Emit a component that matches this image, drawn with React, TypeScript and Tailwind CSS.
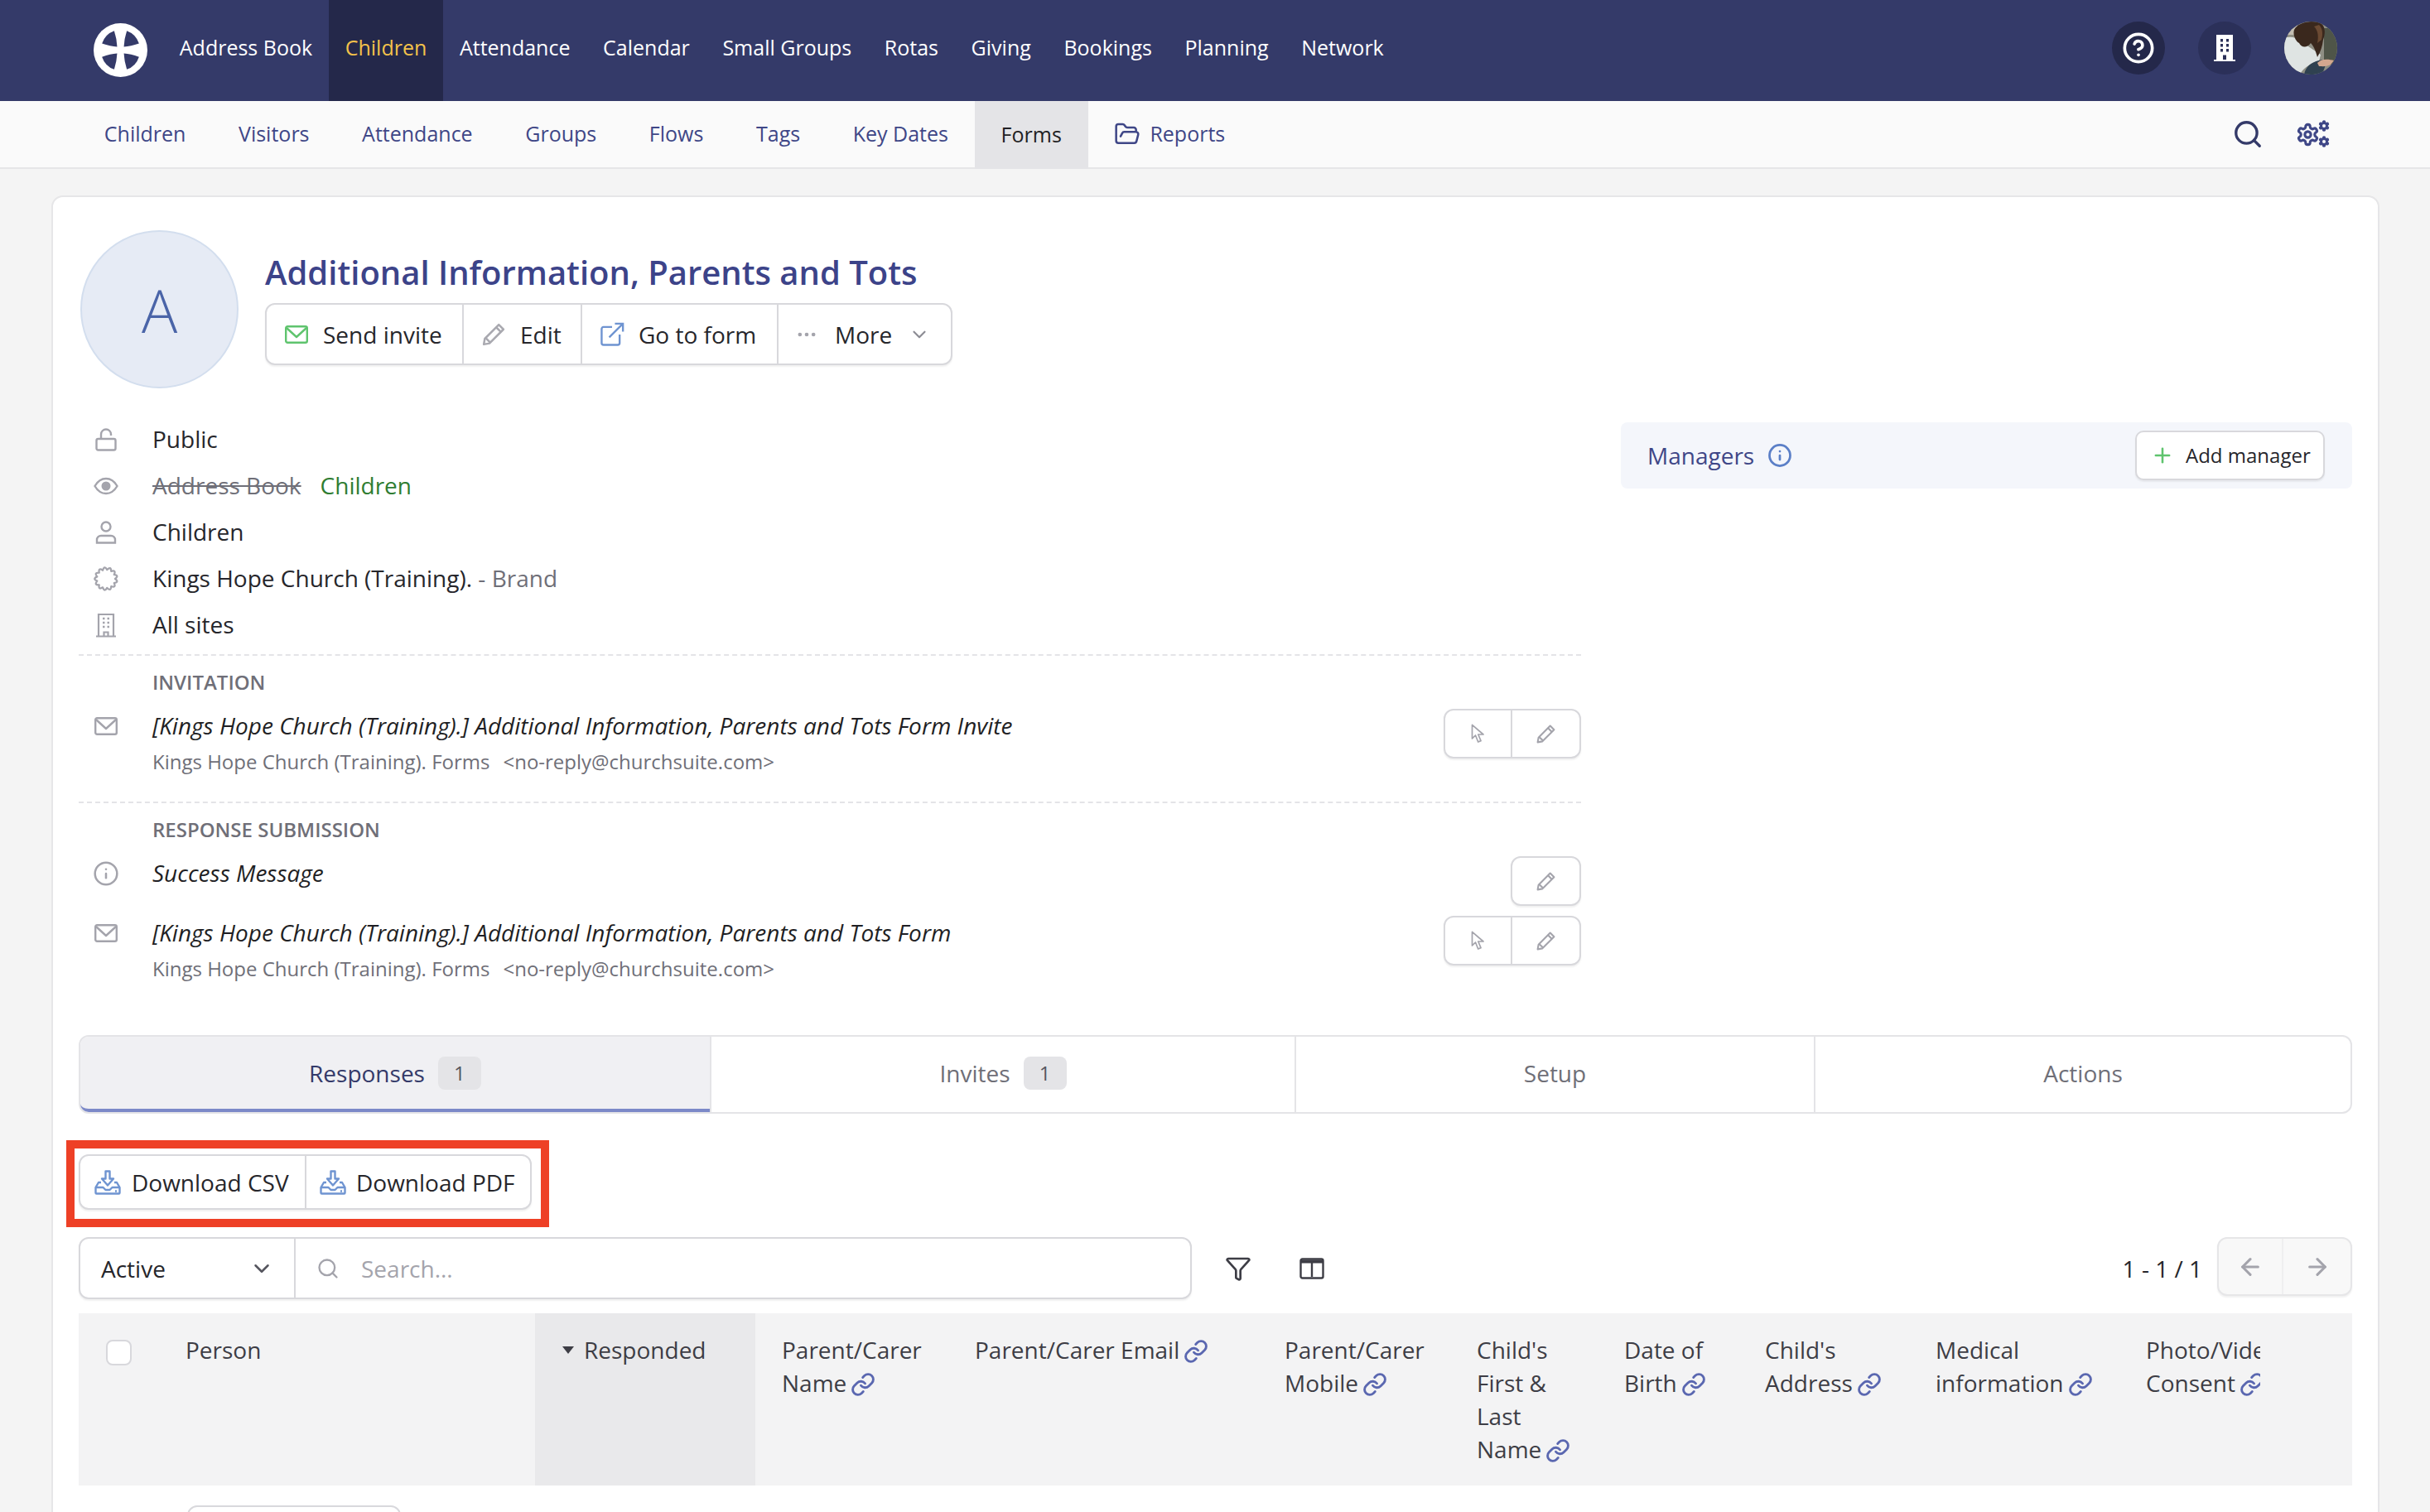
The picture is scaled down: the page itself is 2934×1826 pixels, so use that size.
import {
  ArrowLeft,
  ArrowRight,
  ChevronDown,
  CircleHelp,
  Ellipsis,
  FolderOpen,
  Funnel,
  Info,
  Link,
  Plus,
  Search,
} from 'lucide-react'
import React from 'react'

const topNav = ['Address Book', 'Children', 'Attendance', 'Calendar', 'Small Groups', 'Rotas', 'Giving', 'Bookings', 'Planning', 'Network']
const subNav = ['Children', 'Visitors', 'Attendance', 'Groups', 'Flows', 'Tags', 'Key Dates', 'Forms']

const gearPath =
  'M12.22 2h-.44a2 2 0 0 0-2 2v.18a2 2 0 0 1-1 1.73l-.43.25a2 2 0 0 1-2 0l-.15-.08a2 2 0 0 0-2.73.73l-.22.38a2 2 0 0 0 .73 2.73l.15.1a2 2 0 0 1 1 1.72v.51a2 2 0 0 1-1 1.74l-.15.09a2 2 0 0 0-.73 2.73l.22.38a2 2 0 0 0 2.73.73l.15-.08a2 2 0 0 1 2 0l.43.25a2 2 0 0 1 1 1.73V20a2 2 0 0 0 2 2h.44a2 2 0 0 0 2-2v-.18a2 2 0 0 1 1-1.73l.43-.25a2 2 0 0 1 2 0l.15.08a2 2 0 0 0 2.73-.73l.22-.39a2 2 0 0 0-.73-2.73l-.15-.08a2 2 0 0 1-1-1.74v-.5a2 2 0 0 1 1-1.74l.15-.09a2 2 0 0 0 .73-2.73l-.22-.38a2 2 0 0 0-2.73-.73l-.15.08a2 2 0 0 1-2 0l-.43-.25a2 2 0 0 1-1-1.73V4a2 2 0 0 0-2-2z'

const Logo = () => (
  <svg width="65" height="65" viewBox="0 0 64 64" className="shrink-0">
    <circle cx="32" cy="32" r="32" fill="#fff" />
    <g fill="#343a69">
      <path d="M10 24 Q20 27.500 28 28 Q27.500 18 24.500 9 A24 24 0 0 0 10 24Z" />
      <path d="M54 24 Q44 27.500 36 28 Q36.500 18 39.500 9 A24 24 0 0 1 54 24Z" />
      <path d="M10 40 Q20 36.500 28 36 Q27.500 46 24.500 55 A24 24 0 0 1 10 40Z" />
      <path d="M54 40 Q44 36.500 36 36 Q36.500 46 39.500 55 A24 24 0 0 0 54 40Z" />
    </g>
  </svg>
)

const BuildingSolid = () => (
  <svg width="26" height="32" viewBox="0 0 26 32" fill="#fff">
    <path fillRule="evenodd" d="M3 0h20v30h3v2H0v-2h3zM8 5v3.500h3V5zm7 0v3.500h3V5zM8 11v3.500h3V11zm7 0v3.500h3V11zM8 17v3.500h3V17zm7 0v3.500h3V17zm-4 7.500V30h4v-5.500z" />
  </svg>
)

const Photo = () => (
  <svg width="64" height="64" viewBox="0 0 64 64" className="shrink-0 rounded-full">
    <rect width="64" height="64" fill="#8f8f84" />
    <path d="M48 8h16v44H48z" fill="#4f5548" />
    <path d="M0 0h16v16H0z" fill="#c4bfb3" />
    <path d="M0 20C6 18 14 18 20 24L44 40 42 48C32 50 24 56 20 62 10 60 0 50 0 40Z" fill="#dfe4e3" />
    <path d="M24 64C26 52 36 48 46 46L50 52C48 58 46 64 44 64Z" fill="#2f4150" />
    <path d="M40 50C46 44 54 46 60 47L56 52C50 55 46 54 42 54Z" fill="#d3a78f" />
    <path d="M12 10C16 2 30-2 42 1 50 4 50 14 47 22 46 30 44 36 40 43 38 36 36 30 32 26 26 34 20 30 18 26 14 24 10 16 12 10Z" fill="#3a281d" />
    <path d="M36 6C40 10 42 16 40 26L45 22C47 14 46 8 42 4Z" fill="#6b4a33" />
  </svg>
)

const Cogs = () => (
  <svg width="42" height="34" viewBox="0 0 42 34" fill="none" stroke="#3f4787">
    <svg x="0" y="3" width="29" height="29" viewBox="0 0 24 24" strokeWidth="2.600" strokeLinecap="round" strokeLinejoin="round">
      <path d={gearPath} />
      <circle cx="12" cy="12" r="3" />
    </svg>
    <svg x="27" y="0" width="14" height="14" viewBox="0 0 24 24" fill="#3f4787" strokeWidth="3" strokeLinejoin="round">
      <path d={gearPath} />
      <circle cx="12" cy="12" r="3.500" fill="#fafafa" stroke="none" />
    </svg>
    <svg x="27" y="19" width="14" height="14" viewBox="0 0 24 24" fill="#3f4787" strokeWidth="3" strokeLinejoin="round">
      <path d={gearPath} />
      <circle cx="12" cy="12" r="3.500" fill="#fafafa" stroke="none" />
    </svg>
  </svg>
)

// scalloped ring for the brand row, lobes bulge out between the inner points
const scallop = Array.from({ length: 13 }, (_, i) => {
  const mid = ((i + 0.5) / 13) * Math.PI * 2
  const end = ((i + 1) / 13) * Math.PI * 2
  const cx = (12 + 13.4 * Math.cos(mid)).toFixed(2)
  const cy = (12 + 13.4 * Math.sin(mid)).toFixed(2)
  const x = (12 + 8.8 * Math.cos(end)).toFixed(2)
  const y = (12 + 8.8 * Math.sin(end)).toFixed(2)
  return `Q${cx} ${cy} ${x} ${y}`
}).join(' ')

const BadgeIcon = () => (
  <svg width="30" height="30" viewBox="0 0 24 24" fill="none" stroke="#a4a4ac" strokeWidth="1.800" strokeLinejoin="round">
    <path d={`M20.800 12 ${scallop}Z`} />
  </svg>
)

const BuildingOutline = () => (
  <svg width="28" height="30" viewBox="0 0 28 30" fill="none" stroke="#a4a4ac" strokeWidth="2.200">
    <path d="M5 28.500V2h18v26.500M2 28.500h24M11.500 28.500v-5h5v5" />
    <path d="M10 7h2.500M15.500 7H18M10 12h2.500M15.500 12H18M10 17h2.500M15.500 17H18" strokeWidth="2.500" />
  </svg>
)

const EyeIcon = () => (
  <svg width="30" height="22" viewBox="0 0 30 22" fill="none" stroke="#a4a4ac" strokeWidth="2.400">
    <path d="M1.500 11C5 5 9.500 2 15 2s10 3 13.500 9C25 17 20.500 20 15 20S5 17 1.500 11Z" />
    <circle cx="15" cy="11" r="5.500" fill="#a4a4ac" stroke="none" />
  </svg>
)

const LockIcon = () => (
  <svg width="26" height="28" viewBox="0 0 26 28" fill="none" stroke="#a4a4ac" strokeWidth="2.400">
    <rect x="1.500" y="13" width="23" height="13.500" rx="2" />
    <path d="M7 13V7.500a6 6 0 0 1 12 0V9" />
  </svg>
)

const UserIcon = () => (
  <svg width="26" height="28" viewBox="0 0 26 28" fill="none" stroke="#a4a4ac" strokeWidth="2.400">
    <circle cx="13" cy="7" r="5.500" />
    <path d="M2 26.500V23a5 5 0 0 1 5-5h12a5 5 0 0 1 5 5v3.500z" />
  </svg>
)

const Envelope = ({ color }: { color: string }) => (
  <svg width="28" height="22" viewBox="0 0 28 22" fill="none" stroke={color} strokeWidth="2.400" strokeLinejoin="round" className="shrink-0">
    <rect x="1.200" y="1.200" width="25.600" height="19.600" rx="2" />
    <path d="M2 3l12 11L26 3" />
  </svg>
)

const PencilIcon = ({ size, color }: { size: number; color: string }) => (
  <svg width={size} height={size} viewBox="0 0 24 24" fill="none" stroke={color} strokeWidth="2" strokeLinejoin="round" className="shrink-0">
    <path d="M17 2.500L21.500 7 8 20.500l-5.500 1 1-5.500z" />
    <path d="M14.500 5L19 9.500M4.500 15.500l4 4" />
  </svg>
)

const ExternalIcon = () => (
  <svg width="32" height="32" viewBox="0 0 28 28" fill="none" stroke="#6f94d1" strokeWidth="2.100" className="shrink-0">
    <path d="M14 6H5a2 2 0 0 0-2 2v15a2 2 0 0 0 2 2h15a2 2 0 0 0 2-2v-9" />
    <path d="M11 17L25 3M17 2.500h8.500V11" />
  </svg>
)

const CursorIcon = () => (
  <svg width="17" height="24" viewBox="0 0 17 24" fill="none" stroke="#a4a4ac" strokeWidth="1.700" strokeLinejoin="round">
    <path d="M1.500 1.500V18l4-4 3.200 8 3.300-1.400L8.800 13H15z" />
  </svg>
)

const TrayDown = () => (
  <svg width="32" height="30" viewBox="0 0 32 30" fill="none" stroke="#6f94d1" strokeWidth="2.400" strokeLinejoin="round" className="shrink-0">
    <path d="M13.500 1.500h5v9h4.500L16 18.500 9 10.500h4.500z" />
    <path d="M8 15H5L1.500 21v6.500a1 1 0 0 0 1 1h27a1 1 0 0 0 1-1V21L27 15h-3" />
    <path d="M1.500 21h9l3 3h5l3-3h9" />
    <path d="M25 25.500h2" />
  </svg>
)

const ColumnsIcon = () => (
  <svg width="30" height="26" viewBox="0 0 30 26" fill="none" stroke="#3d3d45" strokeWidth="2.400" className="shrink-0">
    <rect x="1.500" y="1.500" width="27" height="23" rx="2" />
    <path d="M15 3v20" />
    <path d="M1.500 4.500h27" strokeWidth="4" />
  </svg>
)

const LinkIcon = () => <Link size={30} color="#5a67b0" strokeWidth={2.300} className="ml-[5px] inline-block align-[-6px]" />

const ActionButtons = ({ cursor }: { cursor: boolean }) => (
  <div className="flex h-[60px] shrink-0 rounded-[12px] border-2 border-[#d8d8dc] bg-white shadow-[0_2px_2px_rgba(0,0,0,0.06)]">
    {cursor && (
      <div className="flex w-[81px] items-center justify-center border-r-2 border-[#d8d8dc]">
        <CursorIcon />
      </div>
    )}
    <div className="flex w-[81px] items-center justify-center">
      <PencilIcon size={25} color="#a4a4ac" />
    </div>
  </div>
)

const InfoRow = ({ icon, children }: { icon: React.ReactNode; children: React.ReactNode }) => (
  <div className="flex h-[56px] items-center">
    <div className="flex w-[66px] justify-center">{icon}</div>
    <div className="ml-[23px] pb-[2px] text-[28px] text-[#26262b]">{children}</div>
  </div>
)

const MailRow = ({ subject, chunk }: { subject: string; chunk: React.ReactNode }) => (
  <div className="flex">
    <div className="flex h-[44px] w-[89px] shrink-0 items-center pl-[19px]">
      <Envelope color="#a4a4ac" />
    </div>
    <div className="flex-1">
      <div className="h-[44px] text-[28px] leading-[42px] italic text-[#1f1f24]">{subject}</div>
      <div className="h-[44px] text-[24px] leading-[42px] text-[#6f6f78]">
        Kings Hope Church (Training). Forms<span className="ml-[16px]">&lt;no-reply@churchsuite.com&gt;</span>
      </div>
    </div>
    <div className="mt-[1px]">{chunk}</div>
  </div>
)

const columns: { width: number; lines: React.ReactNode[] }[] = [
  { width: 233, lines: ['Parent/Carer', <>Name<LinkIcon /></>] },
  { width: 374, lines: [<>Parent/Carer Email<LinkIcon /></>] },
  { width: 232, lines: ['Parent/Carer', <>Mobile<LinkIcon /></>] },
  { width: 178, lines: ["Child's", 'First &', 'Last', <>Name<LinkIcon /></>] },
  { width: 170, lines: ['Date of', <>Birth<LinkIcon /></>] },
  { width: 206, lines: ["Child's", <>Address<LinkIcon /></>] },
  { width: 254, lines: ['Medical', <>information<LinkIcon /></>] },
  { width: 300, lines: ['Photo/Video', <>Consent<LinkIcon /></>] },
]

const App = () => {
  return (
    <div className="h-[1826px] w-[2934px] overflow-hidden bg-[#f4f4f4] font-['Open_Sans',sans-serif]">
      {/* Top nav */}
      <div className="flex h-[122px] items-stretch bg-[#343a69] pl-[113px] pr-[112px]">
        <div className="flex items-center pb-[2px] pr-[19px]">
          <Logo />
        </div>
        {topNav.map((item) => (
          <div
            key={item}
            className={
              item === 'Children'
                ? 'flex items-center bg-[#24284a] px-[19.8px] pb-[6px] text-[25px] text-[#f3c24a]'
                : 'flex items-center px-[19.8px] pb-[6px] text-[25px] text-white'
            }
          >
            {item}
          </div>
        ))}
        <div className="ml-auto flex items-center gap-[40px] pb-[6px]">
          <div className="flex h-[64px] w-[64px] items-center justify-center rounded-full bg-[#24284a]">
            <CircleHelp size={40} color="#fff" strokeWidth={2.200} />
          </div>
          <div className="flex h-[64px] w-[64px] items-center justify-center rounded-full bg-[#2b3059]">
            <BuildingSolid />
          </div>
          <Photo />
        </div>
      </div>

      {/* Sub nav */}
      <div className="flex h-[82px] items-stretch border-b-2 border-[#e6e6e8] bg-[#fafafa] pl-[94px] pr-[120px]">
        {subNav.map((item) => (
          <div
            key={item}
            className={
              item === 'Forms'
                ? '-mb-[2px] flex items-center bg-[#e4e4e7] px-[31.8px] text-[25px] text-[#1f1f24]'
                : 'flex items-center px-[31.8px] text-[25px] text-[#3f4787]'
            }
          >
            {item}
          </div>
        ))}
        <div className="flex items-center gap-[11px] px-[31.8px] text-[25px] text-[#3f4787]">
          <FolderOpen size={32} strokeWidth={1.900} />
          Reports
        </div>
        <div className="ml-auto flex items-center gap-[39px]">
          <Search size={38} color="#343a69" strokeWidth={2.100} />
          <Cogs />
        </div>
      </div>

      {/* Card */}
      <div className="ml-[62px] mt-[32px] h-[1700px] w-[2811px] rounded-[14px] border-2 border-[#e6e6e8] bg-white pl-[31px] pr-[31px] pt-[40px]">
        <div className="flex gap-[32px] pl-[2px]">
          <div className="flex h-[191px] w-[191px] shrink-0 items-center justify-center rounded-full border-2 border-[#d3deee] bg-[#e6ebf5] text-[72px] font-light text-[#4a64a8]">
            A
          </div>
          <div className="pt-[21px]">
            <div className="h-[60px] text-[40px] leading-[60px] font-semibold text-[#3c4389]">Additional Information, Parents and Tots</div>
            <div className="mt-[7px] flex h-[75px] w-[830px] items-stretch rounded-[12px] border-2 border-[#d8d8dc] bg-white text-[28px] text-[#26262b] shadow-[0_2px_2px_rgba(0,0,0,0.06)]">
              <div className="flex w-[238px] items-center gap-[18px] border-r-2 border-[#d8d8dc] pl-[22px]">
                <Envelope color="#5fc46e" />
                Send invite
              </div>
              <div className="flex w-[143px] items-center gap-[17px] border-r-2 border-[#d8d8dc] pl-[21px]">
                <PencilIcon size={30} color="#a9a9b0" />
                Edit
              </div>
              <div className="flex w-[237px] items-center gap-[16px] border-r-2 border-[#d8d8dc] pl-[20px]">
                <ExternalIcon />
                Go to form
              </div>
              <div className="flex flex-1 items-center pl-[20px]">
                <Ellipsis size={28} color="#a4a4ac" strokeWidth={2} />
                <span className="ml-[20px]">More</span>
                <ChevronDown size={26} color="#8c8c94" strokeWidth={2} className="ml-[20px]" />
              </div>
            </div>
          </div>
        </div>

        <div className="mt-[34px] flex gap-[48px]">
          {/* Left column */}
          <div className="w-[1814px] shrink-0">
            <InfoRow icon={<LockIcon />}>Public</InfoRow>
            <InfoRow icon={<EyeIcon />}>
              <span className="text-[#6f6f78] line-through">Address Book</span>
              <span className="ml-[23px] text-[#2f7d32]">Children</span>
            </InfoRow>
            <InfoRow icon={<UserIcon />}>Children</InfoRow>
            <InfoRow icon={<BadgeIcon />}>
              Kings Hope Church (Training).<span className="text-[#6f6f78]"> - Brand</span>
            </InfoRow>
            <InfoRow icon={<BuildingOutline />}>All sites</InfoRow>

            <div className="mt-[7px] border-t-2 border-dashed border-[#e4e4e7]" />
            <div className="ml-[89px] mt-[12px] h-[40px] text-[24px] leading-[40px] font-semibold text-[#6f6f78]">INVITATION</div>
            <div className="mt-[11px]">
              <MailRow subject="[Kings Hope Church (Training).] Additional Information, Parents and Tots Form Invite" chunk={<ActionButtons cursor />} />
            </div>

            <div className="mt-[25px] border-t-2 border-dashed border-[#e4e4e7]" />
            <div className="ml-[89px] mt-[12px] h-[40px] text-[24px] leading-[40px] font-semibold text-[#6f6f78]">RESPONSE SUBMISSION</div>
            <div className="mt-[11px] flex h-[72px]">
              <div className="flex h-[44px] w-[89px] shrink-0 items-center pl-[17px]">
                <Info size={32} color="#a4a4ac" strokeWidth={1.900} />
              </div>
              <div className="h-[44px] flex-1 text-[28px] leading-[42px] italic text-[#1f1f24]">Success Message</div>
              <div className="mt-[1px]">
                <ActionButtons cursor={false} />
              </div>
            </div>
            <MailRow subject="[Kings Hope Church (Training).] Additional Information, Parents and Tots Form" chunk={<ActionButtons cursor />} />
          </div>

          {/* Managers */}
          <div className="mt-[7px] flex h-[80px] w-[883px] items-center rounded-[8px] bg-[#f4f6fb] pl-[32px] pr-[33px]">
            <span className="text-[28px] text-[#3f4787]">Managers</span>
            <Info size={30} color="#5b7fc7" strokeWidth={2.200} className="ml-[16px]" />
            <div className="ml-auto flex h-[60px] w-[229px] items-center gap-[14px] rounded-[10px] border-2 border-[#d8d8dc] bg-white pl-[17px] text-[24px] text-[#26262b] shadow-[0_2px_2px_rgba(0,0,0,0.06)]">
              <Plus size={28} color="#5fc46e" strokeWidth={2.200} />
              Add manager
            </div>
          </div>
        </div>

        {/* Tabs */}
        <div className="mt-[57px] flex h-[95px] w-[2745px] rounded-[12px] border-2 border-[#e4e4e7] text-[28px] text-[#6f6f78]">
          <div className="flex w-[760px] items-center justify-center gap-[16px] rounded-bl-[10px] rounded-tl-[10px] border-b-4 border-[#7c89c8] bg-[#f0f0f3] text-[#343a69]">
            Responses
            <span className="flex h-[40px] w-[52px] items-center justify-center rounded-[8px] bg-[#e4e4e7] text-[24px] text-[#55555e]">1</span>
          </div>
          <div className="flex w-[708px] items-center justify-center gap-[16px] border-l-2 border-r-2 border-[#e4e4e7] pb-[4px]">
            Invites
            <span className="flex h-[40px] w-[52px] items-center justify-center rounded-[8px] bg-[#e4e4e7] text-[24px] text-[#55555e]">1</span>
          </div>
          <div className="flex w-[627px] items-center justify-center border-r-2 border-[#e4e4e7] pb-[4px]">Setup</div>
          <div className="flex flex-1 items-center justify-center pb-[4px]">Actions</div>
        </div>

        {/* Downloads */}
        <div className="-ml-[15px] mt-[32px] h-[105px] w-[583px] border-[10px] border-[#ee4026] pl-[5px] pt-[7px]">
          <div className="flex h-[67px] w-[547px] rounded-[12px] border-2 border-[#d8d8dc] bg-white text-[28px] text-[#26262b] shadow-[0_2px_2px_rgba(0,0,0,0.06)]">
            <div className="flex w-[273px] items-center gap-[13px] border-r-2 border-[#d8d8dc] pl-[17px]">
              <TrayDown />
              Download CSV
            </div>
            <div className="flex flex-1 items-center gap-[12px] pl-[16px]">
              <TrayDown />
              Download PDF
            </div>
          </div>
        </div>

        {/* Filter row */}
        <div className="mt-[12px] flex h-[75px] w-[2745px] items-center">
          <div className="flex h-full w-[1344px] rounded-[12px] border-2 border-[#d8d8dc] bg-white text-[28px] shadow-[0_2px_2px_rgba(0,0,0,0.06)]">
            <div className="flex w-[260px] items-center border-r-2 border-[#d8d8dc] pl-[25px] pr-[24px] text-[#26262b]">
              Active
              <ChevronDown size={30} color="#55555e" strokeWidth={2} className="ml-auto" />
            </div>
            <div className="flex flex-1 items-center pl-[25px] text-[#a4a4ac]">
              <Search size={28} color="#a4a4ac" strokeWidth={2} />
              <span className="ml-[26px]">Search...</span>
            </div>
          </div>
          <Funnel size={32} color="#3d3d45" strokeWidth={2} className="ml-[40px]" />
          <div className="ml-[58px]">
            <ColumnsIcon />
          </div>
          <div className="ml-auto text-[28px] text-[#26262b]">1 - 1 / 1</div>
          <div className="ml-[18px] flex h-[71px] w-[163px] self-start rounded-[12px] border-2 border-[#e6e6e8] bg-[#f8f8f8] shadow-[0_2px_2px_rgba(0,0,0,0.06)]">
            <div className="flex w-[78px] items-center justify-center border-r-2 border-[#efeff0]">
              <ArrowLeft size={32} color="#a4a4ac" strokeWidth={2.300} />
            </div>
            <div className="flex flex-1 items-center justify-center">
              <ArrowRight size={32} color="#a4a4ac" strokeWidth={2.300} />
            </div>
          </div>
        </div>

        {/* Table header */}
        <div className="mt-[17px] h-[208px] w-[2745px] bg-[#f3f3f4]">
          <div className="flex h-full w-[2634px] overflow-hidden text-[28px] leading-[40px] text-[#3d3d45]">
            <div className="w-[129px] shrink-0 pl-[33px] pt-[32px]">
              <div className="h-[31px] w-[31px] rounded-[8px] border-2 border-[#d8d8dc] bg-white" />
            </div>
            <div className="w-[422px] shrink-0 pt-[24px]">Person</div>
            <div className="flex w-[266px] shrink-0 gap-[12px] bg-[#e9e9eb] pl-[33px] pt-[24px]">
              <span className="mt-[16px] h-0 w-0 border-x-[7px] border-t-[9px] border-x-transparent border-t-[#3d3d45]" />
              Responded
            </div>
            {columns.map((col, i) => (
              <div key={i} className="shrink-0 whitespace-nowrap pl-[32px] pt-[24px]" style={{ width: col.width }}>
                {col.lines.map((line, j) => (
                  <div key={j}>{line}</div>
                ))}
              </div>
            ))}
          </div>
        </div>

        <div className="ml-[131px] mt-[24px] h-[40px] w-[258px] rounded-[12px] border-2 border-[#d8d8dc] bg-white" />
      </div>
    </div>
  )
}

export default App
